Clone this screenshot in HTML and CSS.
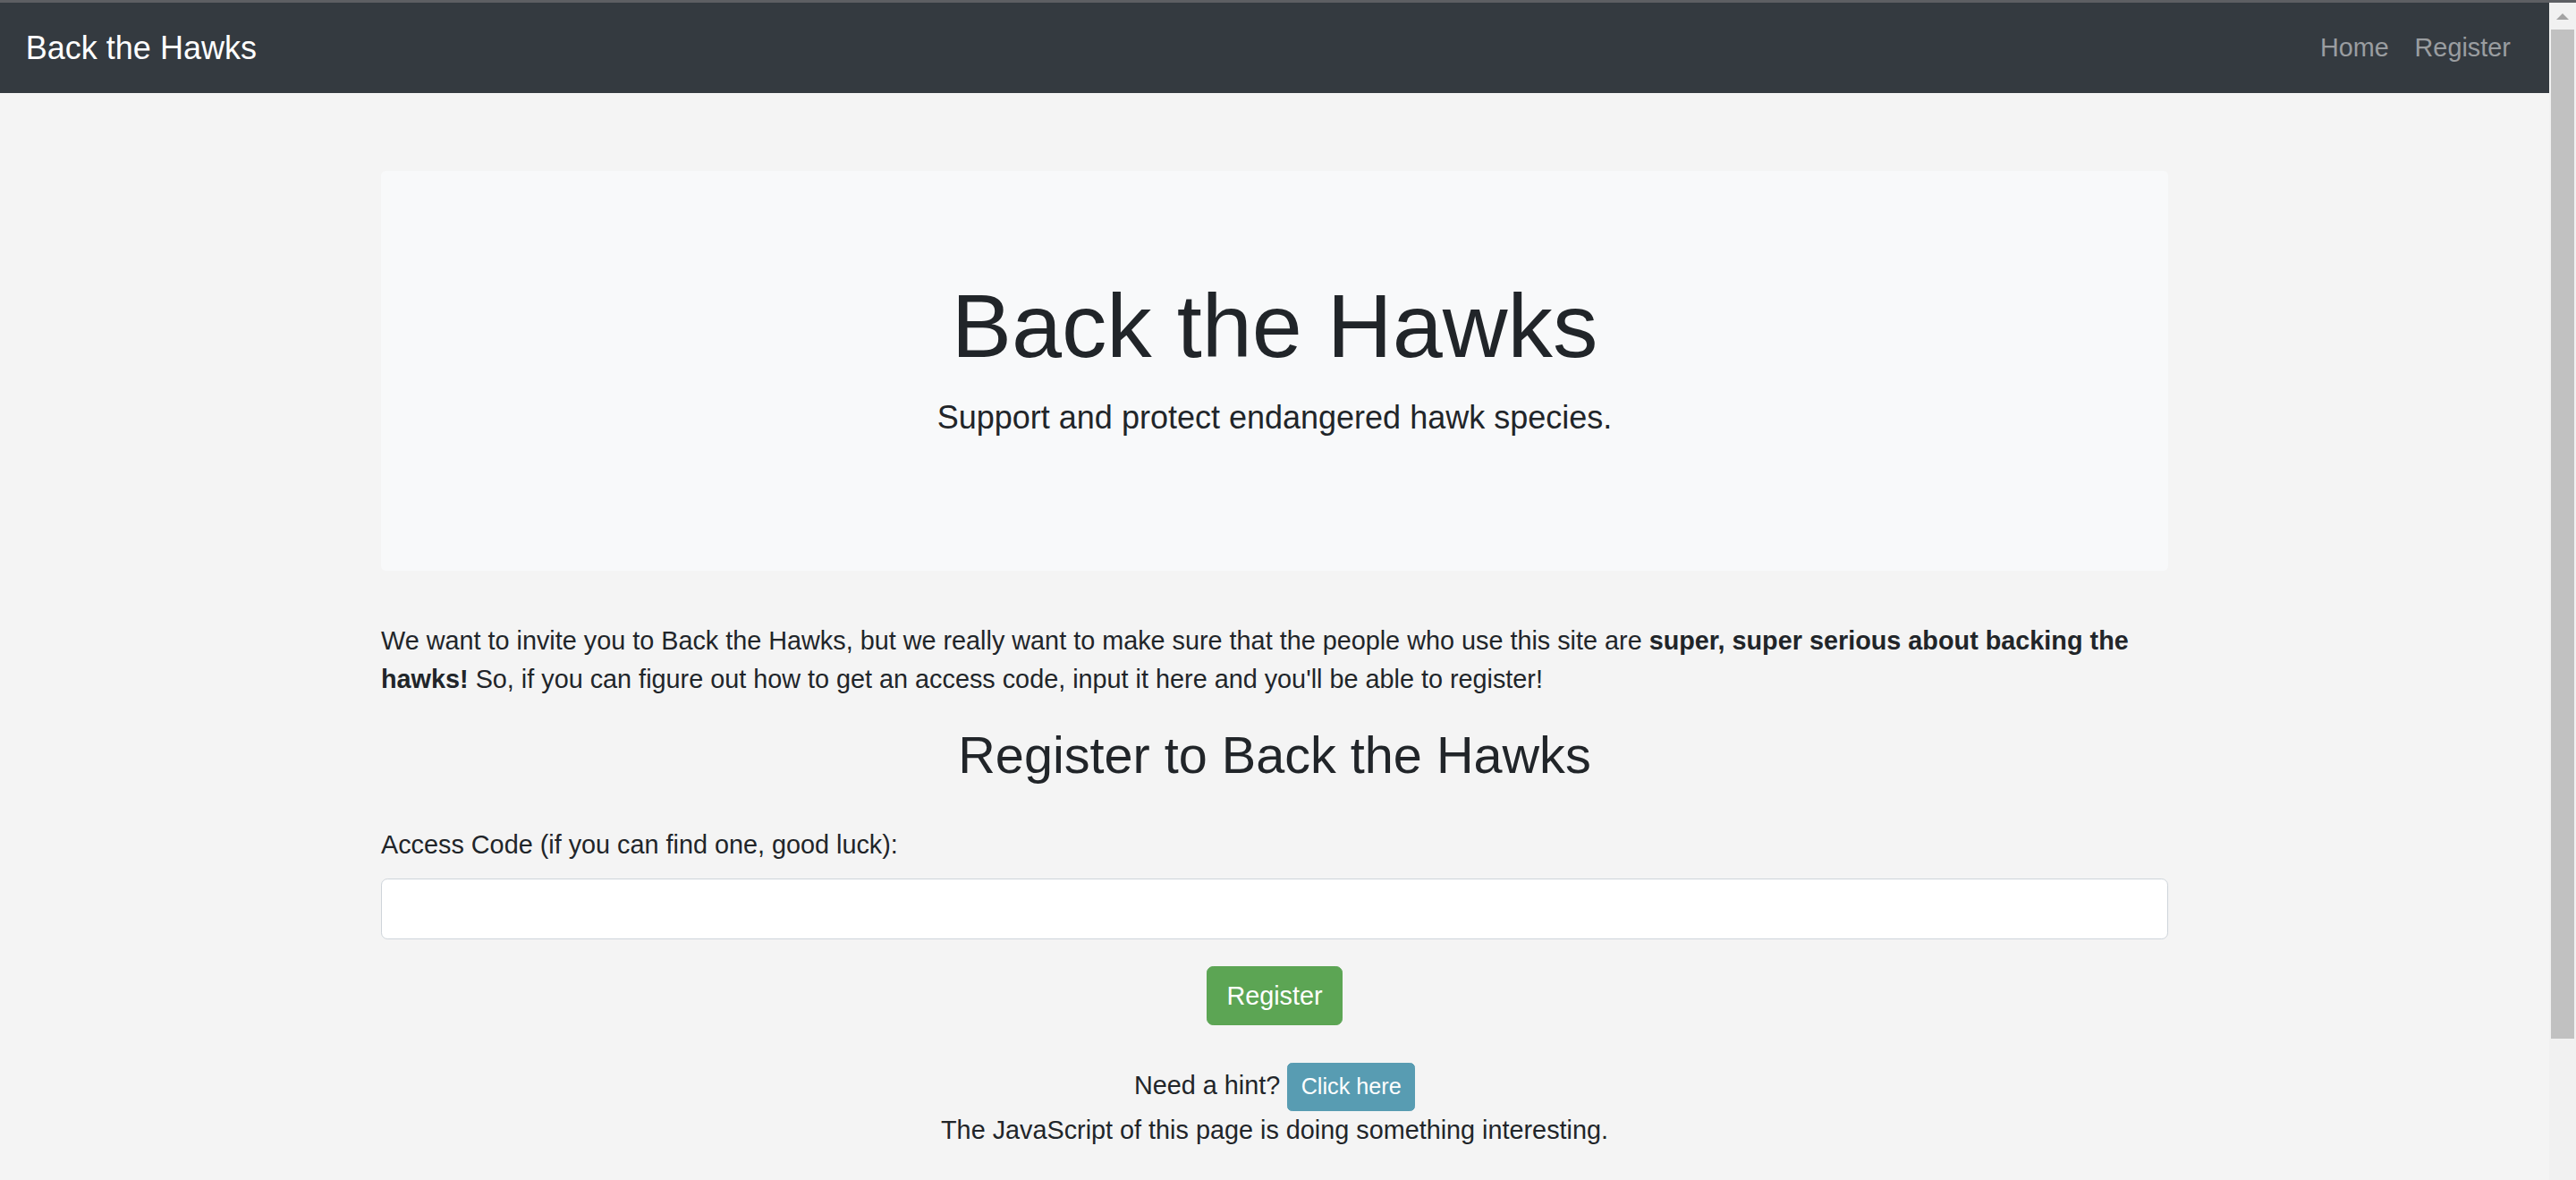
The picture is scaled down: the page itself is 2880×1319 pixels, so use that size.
FILE: index.html
```html
<!DOCTYPE html>
<html lang="en">
<head>
<meta charset="utf-8">
<title>Back the Hawks</title>
<link rel="stylesheet" href="styles.css">
</head>
<body>
<div class="topline"></div>
<div class="frame">
  <div class="page">
    <nav class="navbar">
      <a class="brand" href="#">Back the Hawks</a>
      <ul class="nav">
        <li><a class="nav-link" href="#">Home</a></li>
        <li><a class="nav-link" href="#">Register</a></li>
      </ul>
    </nav>
    <main class="container">
      <section class="jumbotron">
        <h1 class="display">Back the Hawks</h1>
        <p class="lead">Support and protect endangered hawk species.</p>
      </section>
      <p class="intro">We want to invite you to Back the Hawks, but we really want to make sure that the people who use this site are <strong>super, super serious about backing the hawks!</strong> So, if you can figure out how to get an access code, input it here and you'll be able to register!</p>
      <h2 class="form-title">Register to Back the Hawks</h2>
      <form class="reg-form">
        <label class="label" for="code">Access Code (if you can find one, good luck):</label>
        <input class="input" type="text" id="code">
        <div class="actions">
          <button type="button" class="btn btn-success">Register</button>
        </div>
      </form>
      <div class="hint">
        <div class="hint-line">Need a hint? <button type="button" class="btn-sm btn-info">Click here</button></div>
        <div class="hint-note">The JavaScript of this page is doing something interesting.</div>
      </div>
    </main>
  </div>
  <div class="scrollbar">
    <div class="sb-button"><span class="sb-arrow"></span></div>
    <div class="sb-thumb"></div>
  </div>
</div>
</body>
</html>
```

FILE: styles.css
```css
html, body {
  margin: 0;
  padding: 0;
  height: 1319px;
  overflow: hidden;
}
body {
  background: #f4f4f4;
  font-family: "Liberation Sans", Arial, sans-serif;
  font-size: 28.8px;
  line-height: 43.2px;
  color: #212529;
}
.topline {
  height: 3px;
  background: #5d5f63;
}
.frame {
  display: flex;
  height: 1316px;
}
.page {
  flex: 1;
  min-width: 0;
}
.navbar {
  height: 101px;
  background: #343a40;
  display: flex;
  align-items: center;
  justify-content: space-between;
  padding: 0 28.8px;
  box-sizing: border-box;
}
.brand {
  color: #ffffff;
  font-size: 36px;
  line-height: 54px;
  text-decoration: none;
}
.nav {
  display: flex;
  list-style: none;
  margin: 0;
  padding: 0;
}
.nav-link {
  display: block;
  padding: 0 14.4px;
  color: #9a9da0;
  text-decoration: none;
  font-size: 28.8px;
  line-height: 43.2px;
}
.container {
  width: 1998px;
  margin: 0 auto;
}
.jumbotron {
  margin-top: 86.5px;
  margin-bottom: 57.6px;
  padding: 113.7px 57.6px 115.2px;
  background: #f8f9fa;
  border-radius: 5.4px;
  text-align: center;
}
.display {
  font-size: 100.8px;
  line-height: 121px;
  font-weight: 400;
  margin: 0 0 14.4px;
}
.lead {
  font-size: 36px;
  line-height: 54px;
  margin: 0 0 28.8px;
}
.intro {
  margin: 0 0 28.8px;
}
.form-title {
  text-align: center;
  font-size: 57.6px;
  line-height: 69.1px;
  font-weight: 400;
  margin: 0 0 43.2px;
}
.reg-form {
  margin: 0;
}
.label {
  display: block;
  margin-bottom: 16.2px;
}
.input {
  display: block;
  width: 100%;
  height: 68.4px;
  box-sizing: border-box;
  border: 1.8px solid #ced4da;
  border-radius: 7.2px;
  background: #ffffff;
  margin: 0 0 29.8px;
  font: inherit;
  padding: 0 21.6px;
}
.actions {
  display: flex;
  justify-content: center;
}
.btn {
  font-family: inherit;
  font-size: 28.8px;
  line-height: 43.2px;
  padding: 0 21.6px;
  border: 1.8px solid transparent;
  border-radius: 7.2px;
  color: #ffffff;
  cursor: pointer;
}
.btn-success {
  background: #5ca554;
  border-color: #5ca554;
  height: 66px;
}
.hint {
  margin-top: 42px;
  text-align: center;
}
.btn-sm {
  font-family: inherit;
  font-size: 25.2px;
  line-height: 37.8px;
  padding: 7.2px 14.4px;
  border: 1.8px solid transparent;
  border-radius: 5.4px;
  color: #ffffff;
  cursor: pointer;
  vertical-align: baseline;
}
.btn-info {
  background: #589cb2;
  border-color: #589cb2;
}
.scrollbar {
  width: 30px;
  background: #f1f1f1;
  display: flex;
  flex-direction: column;
  align-items: center;
}
.sb-button {
  height: 30px;
  width: 30px;
  display: flex;
  align-items: center;
  justify-content: center;
}
.sb-arrow {
  width: 0;
  height: 0;
  border-left: 7px solid transparent;
  border-right: 7px solid transparent;
  border-bottom: 7px solid #a3a3a3;
}
.sb-thumb {
  width: 26px;
  height: 1128px;
  background: #c1c1c1;
}
```
